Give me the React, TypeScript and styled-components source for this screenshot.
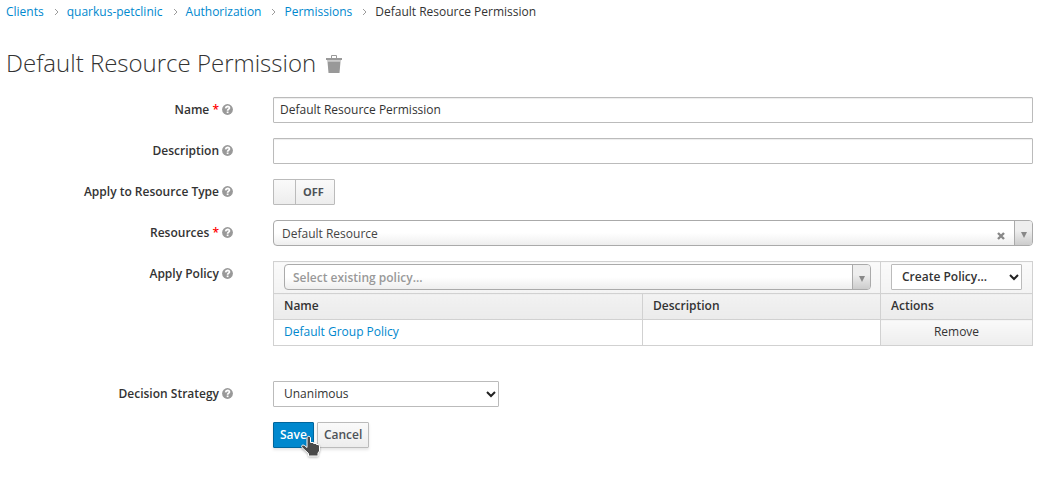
import React from "react";
import styled, { createGlobalStyle } from "styled-components";

const GlobalStyle = createGlobalStyle`
  *, *::before, *::after { box-sizing: border-box; }
  body {
    margin: 0;
    background: #fff;
    color: #333;
    font: 12px/20px "Open Sans", "Liberation Sans", sans-serif;
  }
  button, input, select { font: inherit; color: inherit; margin: 0; }
`;

const Page = styled.main`
  padding: 2px 14px 32px 6px;
`;

const Crumbs = styled.ol`
  display: flex;
  margin: 0;
  padding: 0;
  list-style: none;
`;

const Crumb = styled.li`
  display: flex;
  align-items: center;
`;

const Link = styled.a`
  color: #0088ce;
  text-decoration: none;
`;

const Separator = styled.svg`
  width: 5px;
  height: 8px;
  margin: 0 8px 0 10px;
  fill: none;
  stroke: #9c9c9c;
`;

const Heading = styled.h1`
  display: flex;
  align-items: center;
  gap: 10px;
  margin: 27px 0 21px;
  font-size: 24px;
  line-height: 27px;
  font-weight: 300;
`;

const IconButton = styled.button`
  display: flex;
  padding: 2px 0 0;
  border: 0;
  background: none;
`;

const Form = styled.form`
  display: grid;
  gap: 15px;
`;

const Row = styled.div<{ $spaced?: boolean }>`
  display: grid;
  grid-template-columns: 227px minmax(0, 1fr);
  column-gap: 40px;
  align-items: start;
  margin-top: ${(p) => (p.$spaced ? "20px" : "0")};
`;

const LabelCell = styled.div`
  display: flex;
  justify-content: flex-end;
  align-items: center;
  gap: 3px;
  height: 26px;
`;

const Label = styled.label`
  font-weight: 600;
`;

const Star = styled.span`
  color: #f00;
`;

const HelpSvg = styled.svg`
  width: 11px;
  height: 11px;
  margin-bottom: 1px;
`;

const TextInput = styled.input`
  width: 100%;
  height: 26px;
  padding: 1px 6px 3px;
  border: 1px solid #bbb;
  border-radius: 1px;
  box-shadow: inset 0 1px 1px rgba(0, 0, 0, 0.075);
`;

const Switch = styled.label`
  position: relative;
  display: flex;
  width: 62px;
  height: 26px;
  border: 1px solid #bbb;
  border-radius: 1px;
  background: linear-gradient(#fafafa, #ededed);
  color: #4d5258;
  font-size: 11px;
  line-height: 24px;
  font-weight: 700;
`;

const SwitchInput = styled.input`
  position: absolute;
  inset: 0;
  opacity: 0;
`;

const SwitchHandle = styled.span`
  width: 22px;
  border-right: 1px solid #bbb;
`;

const SwitchText = styled.span`
  flex: 1;
  padding-right: 3px;
  text-align: center;
`;

const Combo = styled.div`
  display: flex;
  width: 100%;
  height: 26px;
  border: 1px solid #aaa;
  border-radius: 4px;
  background: linear-gradient(#fff 50%, #eee);
  overflow: hidden;
`;

const ComboInput = styled.input`
  flex: 1;
  min-width: 0;
  padding: 2px 8px 0;
  border: 0;
  background: none;
  color: #444;
  &::placeholder { color: #999; opacity: 1; font-weight: 600; }
`;

const ClearButton = styled.button`
  display: flex;
  align-items: center;
  padding: 6px 9px 0 0;
  border: 0;
  background: none;
`;

const ComboArrow = styled.button`
  display: flex;
  align-items: center;
  justify-content: center;
  width: 18px;
  padding: 4px 0 0;
  border: 0;
  border-left: 1px solid #aaa;
  background: linear-gradient(#eee 40%, #ccc);
`;

const SelectBox = styled.span<{ $width: string; $strong?: boolean }>`
  position: relative;
  display: block;
  width: ${(p) => p.$width};
  font-weight: ${(p) => (p.$strong ? 600 : 400)};
`;

const Select = styled.select`
  appearance: none;
  display: block;
  width: 100%;
  height: 26px;
  padding: 0 24px 0 10px;
  border: 1px solid #bbb;
  border-radius: 1px;
  background: #fff;
`;

const Chevron = styled.svg`
  position: absolute;
  top: 10px;
  right: 3px;
  width: 10px;
  height: 7px;
  fill: none;
  stroke: #222;
  stroke-width: 2;
  pointer-events: none;
`;

const Table = styled.table`
  width: 100%;
  table-layout: fixed;
  border-collapse: collapse;
  text-align: left;
`;

const Cell = styled.td`
  height: 26px;
  padding: 2px 10px 3px;
  border: 1px solid #d1d1d1;
  vertical-align: top;
`;

const ToolCell = styled(Cell)`
  height: 32px;
  background: linear-gradient(#fafafa, #f3f3f3);
`;

const PolicyCell = styled(ToolCell)`
  padding-right: 9px;
`;

const HeadCell = styled(Cell)`
  background: linear-gradient(#f2f2f2, #ebebeb);
  font-weight: 600;
`;

const ActionCell = styled(Cell)`
  padding: 0;
  background: linear-gradient(#fafafa, #ededed);
`;

const RemoveButton = styled.button`
  display: block;
  width: 100%;
  padding: 2px 0 3px;
  border: 0;
  background: none;
  text-align: center;
`;

const Actions = styled.div`
  grid-column: 2;
  display: flex;
  gap: 3px;
`;

const Button = styled.button<{ $primary?: boolean }>`
  position: relative;
  height: 26px;
  padding: 0 6px;
  border: 1px solid ${(p) => (p.$primary ? "#00659c" : "#bbb")};
  border-radius: 1px;
  background: ${(p) => (p.$primary ? "#0088ce" : "linear-gradient(#fafafa, #ededed)")};
  box-shadow: 0 2px 3px rgba(3, 3, 3, 0.1);
  color: ${(p) => (p.$primary ? "#fff" : "#4d5258")};
  font-weight: 600;
`;

const Pointer = styled.svg`
  position: absolute;
  left: 26px;
  top: 12px;
  width: 21px;
  height: 24px;
  z-index: 1;
  filter: drop-shadow(0 1px 1px rgba(0, 0, 0, 0.3));
`;

const Help = () => (
  <HelpSvg viewBox="0 0 11 11" aria-hidden="true">
    <circle cx="5.5" cy="5.5" r="5.4" fill="#999" />
    <path d="M3.6 4.3C3.8 2.9 4.8 2.5 5.6 2.5C6.8 2.5 7.5 3.2 7.4 4.1C7.3 5.1 5.7 5.2 5.6 6.7" fill="none" stroke="#fff" strokeWidth="1.8" />
    <path d="M4.7 7.5h1.8v1.6H4.7z" fill="#fff" />
  </HelpSvg>
);

const Down = () => (
  <svg width="8" height="6" viewBox="0 0 8 6" aria-hidden="true">
    <path d="M1 0h6L4 6z" fill="#888" />
  </svg>
);

const SelectChevron = () => (
  <Chevron viewBox="0 0 10 7" aria-hidden="true">
    <path d="M1 1L5 5L9 1" />
  </Chevron>
);

type FieldProps = {
  label: string;
  id: string;
  required?: boolean;
  spaced?: boolean;
  children: React.ReactNode;
};

const Field = ({ label, id, required, spaced, children }: FieldProps) => (
  <Row $spaced={spaced}>
    <LabelCell>
      <Label htmlFor={id}>
        {label}
        {required && <Star> *</Star>}
      </Label>
      <Help />
    </LabelCell>
    {children}
  </Row>
);

const trail = ["Clients", "quarkus-petclinic", "Authorization", "Permissions"];

export default function App() {
  return (
    <Page>
      <GlobalStyle />
      <nav aria-label="Breadcrumb">
        <Crumbs>
          {trail.map((name) => (
            <Crumb key={name}>
              <Link href="#">{name}</Link>
              <Separator viewBox="0 0 5 8" aria-hidden="true">
                <path d="M1 1L4 4L1 7" />
              </Separator>
            </Crumb>
          ))}
          <Crumb aria-current="page">Default Resource Permission</Crumb>
        </Crumbs>
      </nav>
      <Heading>
        Default Resource Permission
        <IconButton type="button" aria-label="Delete permission">
          <svg width="16" height="18" viewBox="0 0 16 18" aria-hidden="true">
            <path d="M5.5 3.5V.5h5v3" fill="none" stroke="#999" />
            <path d="M0 3h16v2H0z" fill="#999" />
            <path d="M1 5h14v1.5H1z" fill="#ccc" />
            <path d="M1.5 6.5h13L13.5 18h-11z" fill="#999" />
          </svg>
        </IconButton>
      </Heading>
      <Form onSubmit={(e) => e.preventDefault()}>
        <Field label="Name" id="name" required>
          <TextInput id="name" defaultValue="Default Resource Permission" />
        </Field>
        <Field label="Description" id="description">
          <TextInput id="description" />
        </Field>
        <Field label="Apply to Resource Type" id="resource-type">
          <Switch>
            <SwitchInput type="checkbox" id="resource-type" />
            <SwitchHandle />
            <SwitchText>OFF</SwitchText>
          </Switch>
        </Field>
        <Field label="Resources" id="resources" required>
          <Combo>
            <ComboInput id="resources" defaultValue="Default Resource" />
            <ClearButton type="button" aria-label="Clear resource">
              <svg width="8" height="8" viewBox="0 0 8 8" aria-hidden="true">
                <path d="M1 1L7 7M7 1L1 7" stroke="#888" strokeWidth="2.4" />
              </svg>
            </ClearButton>
            <ComboArrow type="button" aria-label="Show resources">
              <Down />
            </ComboArrow>
          </Combo>
        </Field>
        <Field label="Apply Policy" id="policy">
          <Table>
            <colgroup>
              <col />
              <col width="238" />
              <col width="152" />
            </colgroup>
            <thead>
              <tr>
                <PolicyCell colSpan={2}>
                  <Combo>
                    <ComboInput id="policy" placeholder="Select existing policy..." />
                    <ComboArrow type="button" aria-label="Show policies">
                      <Down />
                    </ComboArrow>
                  </Combo>
                </PolicyCell>
                <ToolCell>
                  <SelectBox $width="100%" $strong>
                    <Select aria-label="Create policy">
                      <option>Create Policy...</option>
                    </Select>
                    <SelectChevron />
                  </SelectBox>
                </ToolCell>
              </tr>
              <tr>
                <HeadCell as="th" scope="col">Name</HeadCell>
                <HeadCell as="th" scope="col">Description</HeadCell>
                <HeadCell as="th" scope="col">Actions</HeadCell>
              </tr>
            </thead>
            <tbody>
              <tr>
                <Cell>
                  <Link href="#">Default Group Policy</Link>
                </Cell>
                <Cell />
                <ActionCell>
                  <RemoveButton type="button">Remove</RemoveButton>
                </ActionCell>
              </tr>
            </tbody>
          </Table>
        </Field>
        <Field label="Decision Strategy" id="strategy" spaced>
          <SelectBox $width="226px">
            <Select id="strategy">
              <option>Unanimous</option>
            </Select>
            <SelectChevron />
          </SelectBox>
        </Field>
        <Row>
          <Actions>
            <Button type="submit" $primary>
              Save
              <Pointer viewBox="0 0 21 24" aria-hidden="true">
                <path
                  d="M7 3C7 .8 10.5 .8 10.5 3V7.5H13.5V8.5H16.5V9.5H18.5L19.5 11V16L18 18V21H8.5V18.5L2 12.5C.8 10.5 2.5 9.5 4.5 10.5L7 12.5z"
                  fill="#4a4a4a"
                  stroke="#fff"
                />
              </Pointer>
            </Button>
            <Button type="button">Cancel</Button>
          </Actions>
        </Row>
      </Form>
    </Page>
  );
}
